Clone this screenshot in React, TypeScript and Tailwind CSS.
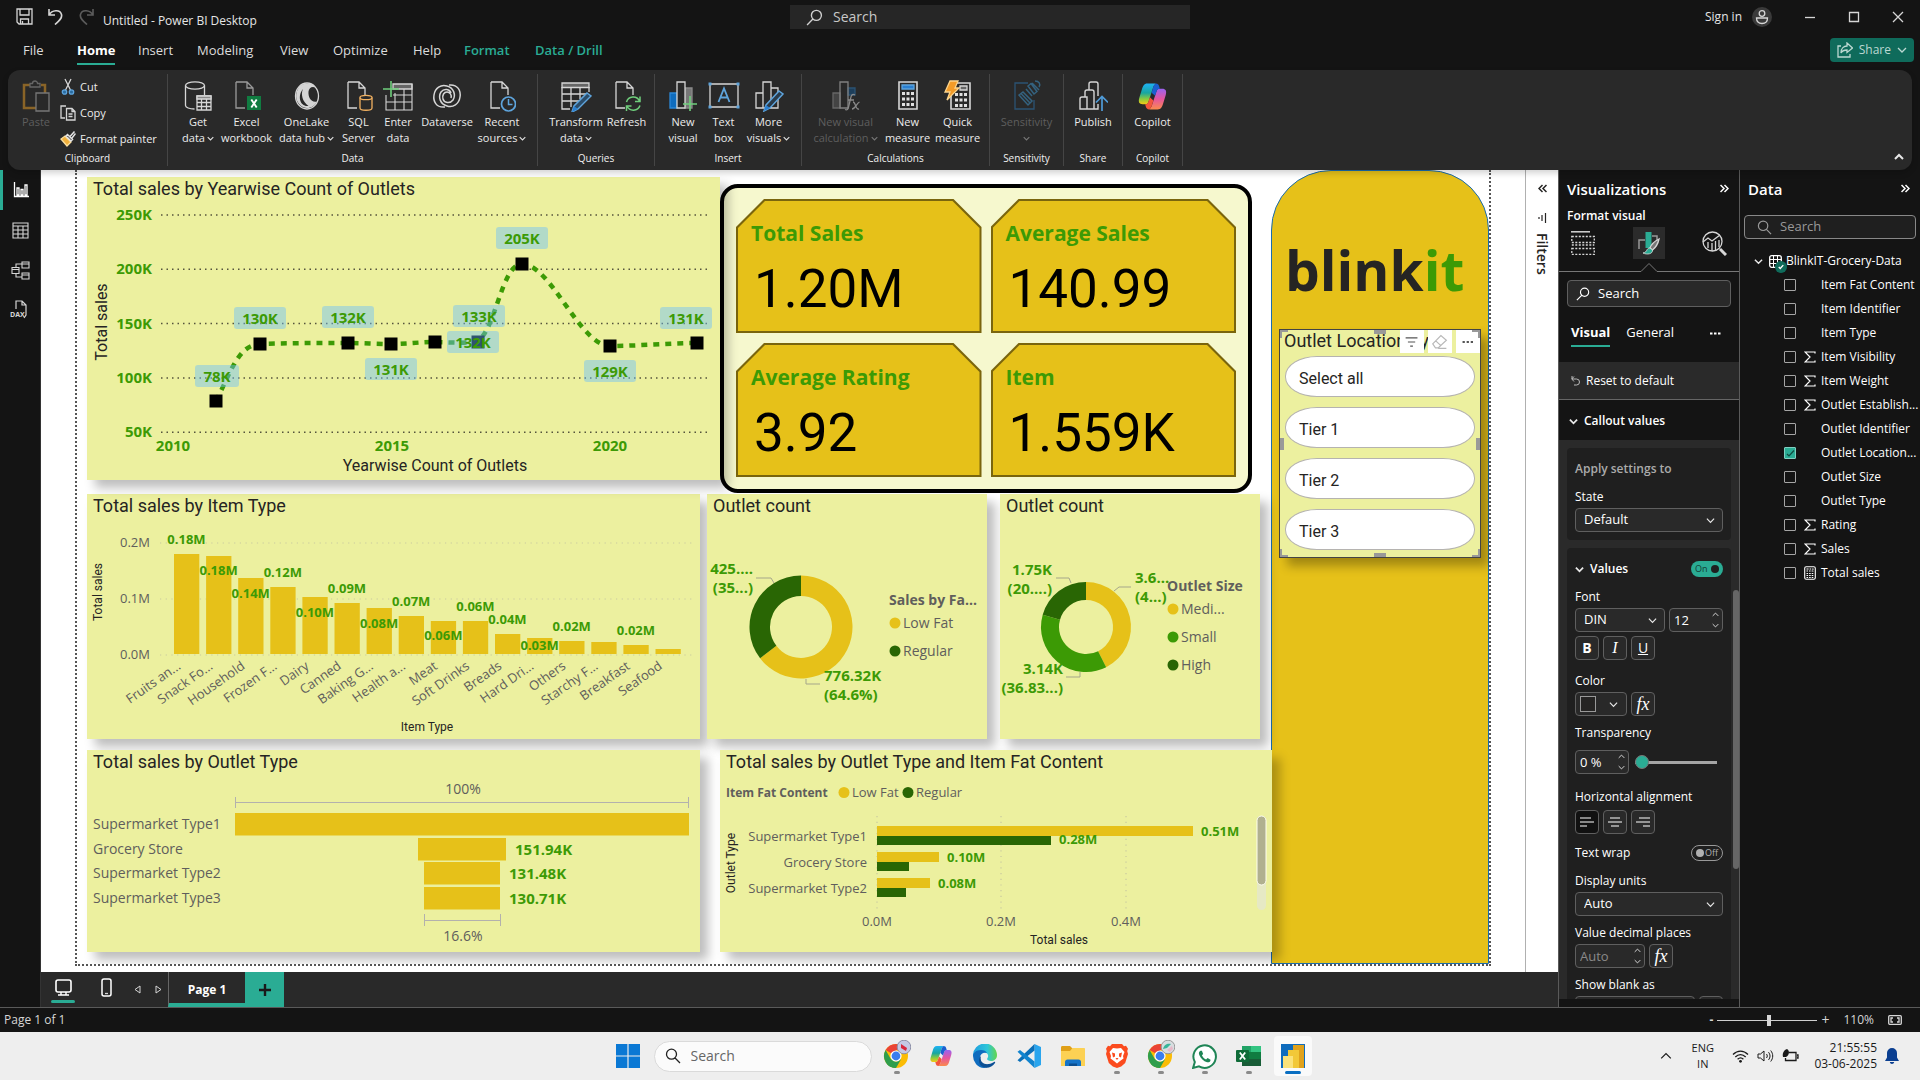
import React, { useState } from "react";
import type { ReactNode } from "react";

const YELLOW = "#e6c119";
const GREEN = "#3c9a05";
const DARK = "#296604";
const GREY = "#605e5c";

/* ---------- small shared glyphs ---------- */

function Svg({ size = 28, h, vb = "0 0 28 28", children }: { size?: number; h?: number; vb?: string; children: ReactNode }) {
  return (
    <svg width={size} height={h ?? size} viewBox={vb} fill="none" stroke="#d6d6d6" strokeWidth="1.3" aria-hidden="true" className="shrink-0">
      {children}
    </svg>
  );
}

function Chevron({ size = 8, color = "#e8e8e8", up = false, w = 1.6 }: { size?: number; color?: string; up?: boolean; w?: number }) {
  return (
    <svg width={size} height={size} viewBox="0 0 10 10" fill="none" stroke={color} strokeWidth={w} aria-hidden="true" className="shrink-0">
      <path d={up ? "M1 7l4-4 4 4" : "M1 3l4 4 4-4"} />
    </svg>
  );
}

function DoubleChevron({ left = false, color = "#fff" }: { left?: boolean; color?: string }) {
  return (
    <svg width="9" height="9" viewBox="0 0 9 9" fill="none" stroke={color} strokeWidth="1.5" aria-hidden="true">
      <path d={left ? "M4.5 1L1 4.500l3.500 3.500M8.500 1L5 4.500l3.500 3.500" : "M.5 1L4 4.500.5 8M4.500 1L8 4.500 4.500 8"} />
    </svg>
  );
}

function Magnifier({ size = 16, flip = false, color = "#d0d0d0" }: { size?: number; flip?: boolean; color?: string }) {
  return (
    <svg width={size} height={size} viewBox="0 0 16 16" fill="none" stroke={color} strokeWidth="1.3" aria-hidden="true" className="shrink-0">
      {flip ? <path d="M6.500 9.500L1 15M14.500 6a4.700 4.700 0 1 1-9.400 0 4.700 4.700 0 0 1 9.400 0z" /> : <path d="M9.800 9.800L15 15M11.500 6.200a5 5 0 1 1-10 0 5 5 0 0 1 10 0z" />}
    </svg>
  );
}

/* ---------- ribbon icons ---------- */

const PagePath = "M3 1h11l6 6v7M14 1v6h6M3 1v26h9";

const icons: Record<string, ReactNode> = {
  paste: (
    <Svg size={28} h={32} vb="0 0 28 32">
      <path d="M8 5H2v23h12M19 5h4v8" stroke="#8a6427" strokeWidth="2.500" />
      <path d="M8 3.500h2.500a2.500 2.500 0 0 1 5 0H18V7H8z" stroke="#666" />
      <path d="M14 13h13v18H14z" stroke="#777" fill="#292929" />
    </Svg>
  ),
  getData: (
    <Svg size={28} h={31} vb="0 0 28 31">
      <ellipse cx="11" cy="4.500" rx="9.500" ry="3.600" />
      <path d="M1.500 4.500v20c0 2 4 3.500 9 3.500M20.500 4.500V14" />
      <path d="M13 15h14v14H13z" fill="#292929" />
      <path d="M13 17.500h14M13 21.500h14M13 25.500h14M17.500 17v12M22.500 17v12" />
      <path d="M13 15h14v3H13z" fill="#888" />
    </Svg>
  ),
  excel: (
    <Svg size={28} h={31} vb="0 0 28 31">
      <path d={PagePath} stroke="#9a9a9a" />
      <rect x="14" y="15" width="14" height="14" fill="#107c41" stroke="none" />
      <path d="M18.300 18.500l5.400 8M23.700 18.500l-5.400 8" stroke="#fff" strokeWidth="1.900" />
    </Svg>
  ),
  onelake: (
    <Svg size={30} h={30} vb="0 0 30 30">
      <ellipse cx="15" cy="15" rx="11.500" ry="13" strokeWidth="1.300" />
      <path d="M6 8C9 1 21 1 24 7c-3.500-2.500-7-.5-7.500 3.500C16 16 19 22 25 20.500c-2 4-5.500 6.500-10 6.500-2.500 0-5-1-7-3C3 19 3.500 12 6 8z" fill="#d4d4d4" stroke="none" />
      <path d="M11 8c-2.500 5-.5 13 5.500 17C8 26 5 15 11 8zM18.500 10.500c2.500-3 6.500-.5 6.500 3.500 0 2.500-1.500 4-3.500 4-3.500-1.200-5-5-3-7.500z" fill="#292929" stroke="none" />
    </Svg>
  ),
  sql: (
    <Svg size={28} h={31} vb="0 0 28 31">
      <path d={PagePath} />
      <path d="M15 16.500v10.500c0 3 12 3 12 0V16.500" stroke="#f0b060" fill="#292929" />
      <ellipse cx="21" cy="16.500" rx="6" ry="2.200" stroke="#f0b060" fill="#292929" />
    </Svg>
  ),
  enter: (
    <Svg size={30} h={31} vb="0 0 30 31">
      <path d="M10 3h19v5H10z" fill="#666" />
      <path d="M29 3v26H3V14M3 21h26M10 14h19M12 12v17M21 8v21" strokeWidth="1.100" />
      <path d="M8 0v16M0 8h16" stroke="#6fce7c" strokeWidth="1.600" />
    </Svg>
  ),
  dataverse: (
    <Svg size={30} h={28} vb="0 0 30 28">
      <path d="M13 25C4 26 1 19 2 13 3 6 9 2 15 4c7 2 9 9 6 14-3 4-9 3-10-1-1-4 1-7 4-7s5 3 4 6M17 3c9-1 12 6 11 12-1 7-7 11-13 9-7-2-9-9-6-14 3-4 9-3 10 1" strokeWidth="1.500" />
    </Svg>
  ),
  recent: (
    <Svg size={28} h={31} vb="0 0 28 31">
      <path d={PagePath} />
      <circle cx="20.500" cy="23" r="7" stroke="#5ea4dc" strokeWidth="1.700" fill="#292929" />
      <path d="M20.500 18v5.500h4" stroke="#5ea4dc" strokeWidth="1.500" />
    </Svg>
  ),
  transform: (
    <Svg size={32} h={31} vb="0 0 32 31">
      <path d="M2 2h27v4.500H2z" fill="#666" />
      <path d="M2 6v22h8M2 13h24M2 20h17M11 6v20M20 6v12M29 6v5" />
      <path d="M27 12l4 3-13 13-6 3 2-6z" fill="#2b4d6b" stroke="#5ea4dc" strokeWidth="1.500" />
      <path d="M14 25l4 3-6 3z" fill="#2a7fd0" stroke="none" />
    </Svg>
  ),
  refresh: (
    <Svg size={28} h={31} vb="0 0 28 31">
      <path d={PagePath} />
      <path d="M13.500 21a7 7 0 0 1 13-1M27 15.500V20.500h-5M27 24.500a7 7 0 0 1-13 .5M13.500 30v-5h5" stroke="#6fce7c" strokeWidth="1.500" />
    </Svg>
  ),
  newVisual: (
    <Svg size={30} h={31} vb="0 0 30 31">
      <path d="M2 12h7v15H2z" fill="#0f6cbd" stroke="#2b88d8" />
      <path d="M17 7h7v20h-7z" fill="#777" stroke="#8a8a8a" />
      <path d="M9 1h8v26H9z" fill="#292929" />
      <path d="M22 15v15M15 23h14" stroke="#6fce7c" strokeWidth="1.600" />
    </Svg>
  ),
  textBox: (
    <Svg size={32} h={28} vb="0 0 32 28">
      <path d="M2 2h28v23H2z" />
      <path d="M10.500 20L16 6.500 21.500 20M12.500 15.500h7" stroke="#5ea4dc" strokeWidth="1.800" />
      <path d="M.5.5h3v3h-3zM28.500.5h3v3h-3zM.5 23.500h3v3h-3zM28.500 23.500h3v3h-3z" fill="#5ea4dc" stroke="none" />
    </Svg>
  ),
  moreVisuals: (
    <Svg size={30} h={31} vb="0 0 30 31">
      <path d="M2 12h7v15H2zM9 1h8v26H9zM17 7h7v20h-7z" />
      <path d="M25 10l4 3-13 14-6 3 2-6z" fill="#2a3b4a" stroke="#5ea4dc" strokeWidth="1.500" />
      <path d="M12 24l4 3-6 3z" fill="#2a7fd0" stroke="none" />
    </Svg>
  ),
  newCalc: (
    <Svg size={30} h={31} vb="0 0 30 31">
      <path d="M2 12h7v15H2z" fill="#444" stroke="#666" />
      <path d="M17 7h7v7h-7z" fill="#1d3e5a" stroke="#2b5373" />
      <path d="M9 1h8v26H9z" stroke="#808080" />
      <path d="M24 14c-3-2-4 1-4.500 4l-2 8c-.5 2.500-1.500 3.500-3.500 2.500M17 19h6M22 21c3 0 2 8 6 7M28.500 21c-3 1-4 7-7.500 7" stroke="#8a8a8a" />
    </Svg>
  ),
  calc: (
    <Svg size={24} h={31} vb="0 0 24 31">
      <path d="M3 1h18v27H3z" strokeWidth="1.600" />
      <path d="M6 4h12v4H6z" fill="#2a7fd0" stroke="#5ea4dc" />
      <path d="M6 11h3v3H6zM10.500 11h3v3h-3zM15 11h3v3h-3zM6 16.500h3v3H6zM10.500 16.500h3v3h-3zM15 16.500h3v3h-3zM6 22h3v3H6zM10.500 22h3v3h-3zM15 22h3v3h-3z" fill="#e0e0e0" stroke="none" />
    </Svg>
  ),
  quick: (
    <Svg size={30} h={32} vb="0 0 30 32">
      <path d="M10 3h17v26H8V16" strokeWidth="1.600" />
      <path d="M17 6h7v4h-7z" fill="#666" />
      <path d="M12 13h3v3h-3zM16.500 13h3v3h-3zM21 13h3v3h-3zM12 18.500h3v3h-3zM16.500 18.500h3v3h-3zM21 18.500h3v3h-3zM12 24h3v3h-3zM16.500 24h3v3h-3zM21 24h3v3h-3z" fill="#e0e0e0" stroke="none" />
      <path d="M7 1h8l-3 7h4L4 20l3-8H2z" fill="#f29b28" stroke="#fbd48c" />
    </Svg>
  ),
  sensitivity: (
    <Svg size={30} h={32} vb="0 0 30 32">
      <path d="M22 20v9H3V3h13" stroke="#2b5373" />
      <path d="M7 15l4-3 9 9-4 4zM9 13.500l9 9.500" stroke="#34627f" strokeWidth="1.500" />
      <path d="M16 6l6 8 3-2.500-6-8zM20 3l7 7M23 1c4 0 6 3 4 6M14 9l6 7" stroke="#34627f" strokeWidth="1.500" />
    </Svg>
  ),
  publish: (
    <Svg size={30} h={32} vb="0 0 30 32">
      <path d="M2 29V19a2 2 0 0 1 2-2h5v12zM7 17v-5a2 2 0 0 1 2-2h5a2 2 0 0 1 2 2v17H9M11 10V4a2 2 0 0 1 2-2h5a2 2 0 0 1 2 2v12M16 29h4v-5" strokeWidth="1.400" />
      <path d="M24 31V17M18 22.500l6-6 6 6" stroke="#4f9bd8" strokeWidth="1.700" />
    </Svg>
  ),
  copilot: <Copilot size={31} />,
  cut: (
    <Svg size={14} h={18} vb="0 0 14 18">
      <path d="M4 1l5.500 11M10 1L4.500 12" />
      <circle cx="3.500" cy="14" r="2.200" stroke="#5ea4dc" fill="#2b6ca0" />
      <circle cx="10.500" cy="14" r="2.200" stroke="#5ea4dc" fill="#2b6ca0" />
    </Svg>
  ),
  copy: (
    <Svg size={16} h={16} vb="0 0 16 16">
      <path d="M5 13H1V1h5M6.500 3.500H12l3 3V15H6.500zM12 3.500v3h3M8.500 9h4M8.500 11.500h4" />
    </Svg>
  ),
  painter: (
    <Svg size={16} h={16} vb="0 0 16 16">
      <path d="M1 8l6 7 4-4-6-6z" fill="#f0b03c" stroke="#fbe0a0" />
      <path d="M6 5l5 5 1.500-1.500-5-5zM10 5.500L14.500.5M12 7l3.500-4.500" stroke="#e4e4e4" strokeWidth="1.500" />
    </Svg>
  ),
};

function Copilot({ size = 24 }: { size?: number }) {
  return (
    <svg width={size} height={size} viewBox="0 0 24 24" aria-hidden="true" className="shrink-0">
      <defs>
        <linearGradient id="cpA" x1="0" y1="0" x2="0" y2="1">
          <stop offset="0" stopColor="#1fb2f5" />
          <stop offset=".45" stopColor="#18a6a0" />
          <stop offset=".75" stopColor="#8ccb3c" />
          <stop offset="1" stopColor="#f6c915" />
        </linearGradient>
        <linearGradient id="cpB" x1="0" y1="0" x2="0" y2="1">
          <stop offset="0" stopColor="#9a62f0" />
          <stop offset=".5" stopColor="#e6559e" />
          <stop offset="1" stopColor="#fb8a4c" />
        </linearGradient>
      </defs>
      <path d="M14.500 2H8C5.500 2 4.500 4 3.700 6.800L1.800 13c-1 3.400 0 5 2.600 5h2.400c1 0 1.600-.6 2-1.800L12.500 5c.4-1.300 1-2 2-3z" fill="url(#cpA)" />
      <path d="M9.500 22H16c2.500 0 3.500-2 4.300-4.800l1.900-6.200c1-3.400 0-5-2.600-5h-2.400c-1 0-1.600.6-2 1.800L11.500 19c-.4 1.300-1 2-2 3z" fill="url(#cpB)" />
      <path d="M14.500 2c1.600 0 2.300.8 2.700 2.200l.5 1.800c-1.400 0-2 .5-2.500 1.800L14 11.500 11.300 9l1.200-4c.4-1.300 1-2 2-3z" fill="#1b5fd0" />
      <path d="M9.500 22c-1.600 0-2.300-.8-2.700-2.200L6.300 18c1.400 0 2-.5 2.500-1.800l1.200-3.700 2.700 2.500-1.200 4c-.4 1.300-1 2-2 3z" fill="#f4553c" />
    </svg>
  );
}

/* ---------- title bar, tabs and ribbon ---------- */

function TitleBar() {
  return (
    <header className="grid h-8 grid-cols-[790fr_400px_730fr] items-center text-[#e6e6e6]">
      <div className="flex items-center pl-4">
        <button aria-label="Save" className="mr-3.5">
          <Svg size={17} vb="0 0 17 17"><path d="M1 1h15v15H3l-2-2zM4 1v6h9V1M4.500 16v-5h8v5M6.500 16v-3" /></Svg>
        </button>
        <button aria-label="Undo" className="mr-3.5">
          <Svg size={17} vb="0 0 17 17"><path d="M2 1v6h6M2 7C5 2 13 1 14.500 6.500 15.500 10 12 13 8 16.500" strokeWidth="1.600" /></Svg>
        </button>
        <button aria-label="Redo" className="mr-2">
          <Svg size={17} vb="0 0 17 17"><path d="M15 1v6H9M15 7C12 2 4 1 2.500 6.500 1.500 10 5 13 9 16.500" stroke="#5c5c5c" strokeWidth="1.600" /></Svg>
        </button>
        <span className="pt-2.5 text-xs">Untitled - Power BI Desktop</span>
      </div>
      <label className="mt-0.5 flex h-6 items-center gap-2.5 bg-[#262626] pl-4">
        <Magnifier size={17} flip />
        <input aria-label="Search commands" placeholder="Search" className="w-full bg-transparent text-sm outline-none placeholder:text-[#c8c8c8]" />
      </label>
      <div className="flex items-center justify-end pt-0.5 text-xs">
        <button className="mr-2.5">Sign in</button>
        <button aria-label="Account" className="mr-8 flex size-5 items-center justify-center rounded-full bg-[#3a3a3a]">
          <Svg size={16} vb="0 0 16 16"><circle cx="8" cy="4.500" r="2.800" /><path d="M2.500 9h11c0 3.500-2 5.500-5.500 5.500S2.500 12.500 2.500 9z" /></Svg>
        </button>
        <button aria-label="Minimize" className="mr-8"><Svg size={12} vb="0 0 12 12"><path d="M1 6.500h10" /></Svg></button>
        <button aria-label="Maximize" className="mr-8"><Svg size={12} vb="0 0 12 12"><path d="M1.500 1.500h9v9h-9z" /></Svg></button>
        <button aria-label="Close" className="mr-4"><Svg size={12} vb="0 0 12 12"><path d="M1 1l10 10M11 1L1 11" /></Svg></button>
      </div>
    </header>
  );
}

function Tabs() {
  const tabs: [string, string][] = [
    ["File", "w-[54px]"],
    ["Home", "w-[61px] font-bold text-white"],
    ["Insert", "w-[59px]"],
    ["Modeling", "w-[83px]"],
    ["View", "w-[53px]"],
    ["Optimize", "w-20"],
    ["Help", "w-[51px]"],
    ["Format", "w-[71px] font-semibold text-[#2aac94]"],
    ["Data / Drill", "w-20 font-semibold text-[#2aac94]"],
  ];
  return (
    <nav className="flex h-[38px] items-center justify-between pr-1.5 pb-0.5 pl-[23px] text-[#dcdcdc]">
      <div className="flex">
        {tabs.map(([t, c]) => (
          <button key={t} className={`${c} whitespace-nowrap text-left text-[13px] leading-5`}>
            <span className={t === "Home" ? "border-b-2 border-[#2aac94] pb-1" : ""}>{t}</span>
          </button>
        ))}
      </div>
      <button className="flex h-6 items-center gap-1.5 rounded bg-[#0f6b5b] px-[7px] text-xs text-[#bcd8d2]">
        <Svg size={16} vb="0 0 16 16"><path d="M4 4H1v11h12v-3M4 11c0-5 3-7 6-7V1l5.500 5L10 10.500V8C7 8 5 9 4 11z" stroke="#bcd8d2" /></Svg>
        Share
        <Chevron size={10} color="#bcd8d2" w={1.3} />
      </button>
    </nav>
  );
}

type Item = { icon: string; lines: string[]; w: string; drop?: boolean; off?: boolean };

function RibbonItem({ icon, lines, w, drop, off }: Item) {
  return (
    <button disabled={off} className={`${w} flex shrink-0 flex-col items-center whitespace-nowrap text-[11px] leading-4 ${off ? "text-[#5e5e5e]" : "text-[#ececec]"}`}>
      <span className="flex h-10 items-center pt-1">{icons[icon]}</span>
      <span>{lines[0]}</span>
      <span className="flex h-4 items-center gap-0.5">
        {lines[1]}
        {drop && <Chevron size={7} color={off ? "#777" : "#e0e0e0"} />}
      </span>
    </button>
  );
}

function RibbonGroup({ name, w, items }: { name: string; w: string; items: Item[] }) {
  return (
    <section aria-label={name} className={`${w} flex shrink-0 flex-col border-r border-[#454545]`}>
      <div className="flex justify-center">{items.map((i) => <RibbonItem key={i.icon + i.lines.join()} {...i} />)}</div>
      <div className="mt-1.5 text-center text-[10px] leading-3 text-[#f0f0f0]">{name}</div>
    </section>
  );
}

function Ribbon() {
  return (
    <div className="relative z-20 mx-2 flex h-[100px] rounded-xl bg-[#292929] py-1 shadow-[0_3px_6px_rgba(0,0,0,0.18)]">
      <section aria-label="Clipboard" className="flex w-40 shrink-0 flex-col border-r border-[#454545]">
        <div className="flex h-[78px] pl-3">
          <button disabled className="flex w-8 flex-col items-center text-[11px] leading-4 text-[#5e5e5e]">
            <span className="flex h-10 items-end pb-0.5">{icons.paste}</span>
            Paste
          </button>
          <div className="flex flex-col pl-2 text-[11px] text-[#ececec]">
            {[["Cut", "cut"], ["Copy", "copy"], ["Format painter", "painter"]].map(([t, i]) => (
              <button key={t} className="flex h-[26px] items-center gap-1 whitespace-nowrap">
                <span className="flex w-4 justify-center">{icons[i]}</span>
                {t}
              </button>
            ))}
          </div>
        </div>
        <div className="text-center text-[10px] leading-3 text-[#f0f0f0]">Clipboard</div>
      </section>
      <RibbonGroup name="Data" w="w-[370px]" items={[
        { icon: "getData", lines: ["Get", "data"], w: "w-[46px]", drop: true },
        { icon: "excel", lines: ["Excel", "workbook"], w: "w-[51px]" },
        { icon: "onelake", lines: ["OneLake", "data hub"], w: "w-[69px]", drop: true },
        { icon: "sql", lines: ["SQL", "Server"], w: "w-[35px]" },
        { icon: "enter", lines: ["Enter", "data"], w: "w-11" },
        { icon: "dataverse", lines: ["Dataverse", ""], w: "w-[54px]" },
        { icon: "recent", lines: ["Recent", "sources"], w: "w-14", drop: true },
      ]} />
      <RibbonGroup name="Queries" w="w-[117px]" items={[
        { icon: "transform", lines: ["Transform", "data"], w: "w-[61px]", drop: true },
        { icon: "refresh", lines: ["Refresh", ""], w: "w-10" },
      ]} />
      <RibbonGroup name="Insert" w="w-[147px]" items={[
        { icon: "newVisual", lines: ["New", "visual"], w: "w-[41px]" },
        { icon: "textBox", lines: ["Text", "box"], w: "w-10" },
        { icon: "moreVisuals", lines: ["More", "visuals"], w: "w-[50px]", drop: true },
      ]} />
      <RibbonGroup name="Calculations" w="w-[188px]" items={[
        { icon: "newCalc", lines: ["New visual", "calculation"], w: "w-[72px]", drop: true, off: true },
        { icon: "calc", lines: ["New", "measure"], w: "w-[52px]" },
        { icon: "quick", lines: ["Quick", "measure"], w: "w-12" },
      ]} />
      <RibbonGroup name="Sensitivity" w="w-[74px]" items={[{ icon: "sensitivity", lines: ["Sensitivity", ""], w: "w-16", drop: true, off: true }]} />
      <RibbonGroup name="Share" w="w-[59px]" items={[{ icon: "publish", lines: ["Publish", ""], w: "w-14" }]} />
      <RibbonGroup name="Copilot" w="w-[60px]" items={[{ icon: "copilot", lines: ["Copilot", ""], w: "w-14" }]} />
      <button aria-label="Collapse ribbon" className="mr-2 ml-auto self-end pb-1"><Chevron size={10} up w={2} /></button>
    </div>
  );
}

/* ---------- report visuals ---------- */

const CARD = "bg-[#ecf09f] shadow-[8px_8px_10px_rgba(0,0,0,0.26)]";

function Visual({ title, className = "", children }: { title: string; className?: string; children: ReactNode }) {
  return (
    <section aria-label={title} className={`${CARD} ${className}`}>
      <h2 className="h-6 truncate pl-1.5 font-[Roboto] text-[18px] leading-6 text-[#252423]">{title}</h2>
      {children}
    </section>
  );
}

function Plot({ vb, label, children }: { vb: string; label: string; children: ReactNode }) {
  return (
    <svg viewBox={vb} role="img" aria-label={label} className="block h-auto w-full">
      {children}
    </svg>
  );
}

function DataText({ x, y, children, a = "start", s = 15 }: { x: number; y: number; children: ReactNode; a?: "start" | "middle" | "end"; s?: number }) {
  return <text x={x} y={y} textAnchor={a} fontSize={s} fontWeight="700" fill={GREEN}>{children}</text>;
}

function AxisText({ x, y, children, a = "start", s = 14, bold = false }: { x: number; y: number; children: ReactNode; a?: "start" | "middle" | "end"; s?: number; bold?: boolean }) {
  return <text x={x} y={y} textAnchor={a} fontSize={s} fontWeight={bold ? 700 : 400} fill={GREY}>{children}</text>;
}

function AxisTitle({ x, y, children, s = 12, vertical = false }: { x: number; y: number; children: ReactNode; s?: number; vertical?: boolean }) {
  return (
    <text x={x} y={y} textAnchor="middle" fontSize={s} fill="#252423" className="font-[Roboto]" transform={vertical ? `rotate(-90 ${x} ${y})` : undefined}>
      {children}
    </text>
  );
}

function LineVisual() {
  const pts = [[216, 401], [260, 344], [348, 343], [391, 344], [435, 342], [478, 342], [522, 264], [610, 346], [697, 343]];
  const tags: [number, number, string][] = [
    [217, 376, "78K"], [260, 318, "130K"], [348, 317, "132K"], [391, 369, "131K"], [479, 316, "133K"],
    [473, 342, "132K"], [522, 238, "205K"], [610, 371, "129K"], [686, 318, "131K"],
  ];
  return (
    <Plot vb="87 201 633 279" label="Total sales per year, 2011 to 2022">
      {["250K", "200K", "150K", "100K", "50K"].map((t, i) => (
        <g key={t}>
          <line x1="161" x2="709" y1={215 + i * 54.3} y2={215 + i * 54.3} stroke="#55543c" strokeWidth="1.500" strokeDasharray="1.500 4" />
          <DataText x={152} y={220 + i * 54.3} a="end">{t}</DataText>
        </g>
      ))}
      {[["2010", 173], ["2015", 392], ["2020", 610]].map(([t, x]) => <DataText key={t} x={x as number} y={451} a="middle">{t}</DataText>)}
      <path
        d="M216 401C231 372 238 345 260 344C290 343 318 343 348 343C362 343 377 344 391 344C406 344 420 342 435 342C449 342 464 344 478 341C496 328 502 264 522 264C551 264 580 346 610 346C639 346 668 343 697 343"
        fill="none" stroke={GREEN} strokeWidth="4.500" strokeDasharray="6 6"
      />
      {pts.map(([x, y]) => <rect key={x} x={x - 6.500} y={y - 6.500} width="13" height="13" fill="#000" />)}
      {tags.map(([x, y, t]) => {
        const w = t.length === 3 ? 44 : 52;
        return (
          <g key={`${x}`}>
            <rect x={x - w / 2} y={y - 11} width={w} height="22" rx="3" fill="#6abdfc" fillOpacity=".445" />
            <DataText x={x} y={y + 6} a="middle">{t}</DataText>
          </g>
        );
      })}
      <AxisTitle x={435} y={471} s={16}>Yearwise Count of Outlets</AxisTitle>
      <AxisTitle x={107} y={322} s={16} vertical>Total sales</AxisTitle>
    </Plot>
  );
}

function ItemTypeVisual() {
  const rows: [string, number, string, number][] = [
    ["Fruits an...", 554, "0.18M", 544], ["Snack Fo...", 556, "0.18M", 575], ["Household", 578, "0.14M", 598],
    ["Frozen F...", 587, "0.12M", 577], ["Dairy", 597, "0.10M", 617], ["Canned", 603, "0.09M", 593],
    ["Baking G...", 608, "0.08M", 628], ["Health a...", 616, "0.07M", 606], ["Meat", 621, "0.06M", 640],
    ["Soft Drinks", 621, "0.06M", 611], ["Breads", 634, "0.04M", 624], ["Hard Dri...", 638, "0.03M", 650],
    ["Others", 641, "0.02M", 631], ["Starchy F...", 642, "", 0], ["Breakfast", 645, "0.02M", 635], ["Seafood", 649, "", 0],
  ];
  return (
    <Plot vb="87 518 613 221" label="Total sales per item type">
      {["0.2M", "0.1M", "0.0M"].map((t, i) => (
        <g key={t}>
          <line x1="160" x2="692" y1={543 + i * 56} y2={543 + i * 56} stroke="#c9c9a0" strokeWidth="1.200" strokeDasharray="1.200 4.500" />
          <AxisText x={150} y={547 + i * 56} a="end" s={13}>{t}</AxisText>
        </g>
      ))}
      {rows.map(([n, top], i) => <rect key={n} x={174 + i * 32.1} y={top} width="25.300" height={654 - top} fill={YELLOW} />)}
      {rows.map(([n, , v, y], i) => {
        const cx = 186.500 + i * 32.1;
        return (
          <g key={n}>
            {v && <DataText x={cx} y={y} a="middle" s={13}>{v}</DataText>}
            <text x={cx - 5} y={668} textAnchor="end" fontSize="13" fill={GREY} transform={`rotate(-35 ${cx - 5} 668)`}>{n}</text>
          </g>
        );
      })}
      <AxisTitle x={427} y={731}>Item Type</AxisTitle>
      <AxisTitle x={102} y={592} vertical>Total sales</AxisTitle>
    </Plot>
  );
}

function Ring({ cx, cy, r, ir, parts }: { cx: number; cy: number; r: number; ir: number; parts: [number, string][] }) {
  let from = 0;
  const at = (f: number, rad: number) => `${cx + rad * Math.sin(f * 2 * Math.PI)} ${cy - rad * Math.cos(f * 2 * Math.PI)}`;
  return (
    <>
      {parts.map(([f, color]) => {
        const a = from;
        const b = (from += f);
        const big = f > 0.5 ? 1 : 0;
        return <path key={color} fill={color} d={`M${at(a, r)}A${r} ${r} 0 ${big} 1 ${at(b, r)}L${at(b, ir)}A${ir} ${ir} 0 ${big} 0 ${at(a, ir)}Z`} />;
      })}
    </>
  );
}

function FatDonut() {
  return (
    <Plot vb="707 518 280 221" label="Sales by fat content">
      <Ring cx={801} cy={627} r={51.5} ir={31} parts={[[0.646, YELLOW], [0.354, DARK]]} />
      <path d="M756 578h15l3 5M806 679v5h14" fill="none" stroke="#a5a68a" />
      <DataText x={753} y={574} a="end">425....</DataText>
      <DataText x={753} y={593} a="end">(35...)</DataText>
      <DataText x={824} y={681}>776.32K</DataText>
      <DataText x={824} y={700}>(64.6%)</DataText>
      <AxisText x={889} y={605} bold s={14}>Sales by Fa...</AxisText>
      <circle cx="895" cy="623" r="5.500" fill={YELLOW} />
      <AxisText x={903} y={628}>Low Fat</AxisText>
      <circle cx="895" cy="651" r="5.500" fill={DARK} />
      <AxisText x={903} y={656}>Regular</AxisText>
    </Plot>
  );
}

function SizeDonut() {
  return (
    <Plot vb="1000 518 260 221" label="Outlet count by size">
      <Ring cx={1086} cy={627} r={45} ir={27} parts={[[0.426, YELLOW], [0.368, GREEN], [0.206, DARK]]} />
      <path d="M1056 578h13l2 5M1114 591l5-4h12M1066 677h14v-5" fill="none" stroke="#a5a68a" />
      <DataText x={1052} y={575} a="end">1.75K</DataText>
      <DataText x={1052} y={594} a="end">(20....)</DataText>
      <DataText x={1135} y={583}>3.6...</DataText>
      <DataText x={1135} y={602}>(4...)</DataText>
      <DataText x={1063} y={674} a="end">3.14K</DataText>
      <DataText x={1063} y={693} a="end">(36.83...)</DataText>
      <AxisText x={1167} y={591} bold s={14}>Outlet Size</AxisText>
      {[["Medi...", YELLOW, 609], ["Small", GREEN, 637], ["High", DARK, 665]].map(([t, c, y]) => (
        <g key={t}>
          <circle cx="1173" cy={y} r="5.500" fill={c as string} />
          <AxisText x={1181} y={(y as number) + 5}>{t}</AxisText>
        </g>
      ))}
    </Plot>
  );
}

function FunnelVisual() {
  const rows: [string, number, number, number, string][] = [
    ["Supermarket Type1", 235, 454, 813, ""],
    ["Grocery Store", 418, 88, 838, "151.94K"],
    ["Supermarket Type2", 424, 76, 862, "131.48K"],
    ["Supermarket Type3", 424, 76, 887, "130.71K"],
  ];
  return (
    <Plot vb="87 774 613 178" label="Total sales per outlet type">
      <AxisText x={463} y={794} a="middle">100%</AxisText>
      <path d="M235.500 797v11M235.500 802.500h453M688.500 797v11M424.500 914v12M424.500 920.500h76M500.500 914v12" stroke="#b3b1ad" fill="none" />
      {rows.map(([n, x, w, y, v]) => (
        <g key={n}>
          <AxisText x={93} y={y + 16}>{n}</AxisText>
          <rect x={x} y={y} width={w} height="22.500" fill={YELLOW} />
          {v && <DataText x={x + w + 9} y={y + 17}>{v}</DataText>}
        </g>
      ))}
      <AxisText x={463} y={941} a="middle">16.6%</AxisText>
    </Plot>
  );
}

function ClusterVisual() {
  const rows: [string, number, number, number][] = [["Supermarket Type1", 826, 316, 174], ["Grocery Store", 852, 62, 32], ["Supermarket Type2", 878, 53, 29]];
  return (
    <Plot vb="720 774 552 178" label="Total sales per outlet type and fat content">
      <AxisText x={726} y={797} bold s={12}>Item Fat Content</AxisText>
      <circle cx="844" cy="792.500" r="5.500" fill={YELLOW} />
      <AxisText x={852} y={797} s={13}>Low Fat</AxisText>
      <circle cx="908" cy="792.500" r="5.500" fill={DARK} />
      <AxisText x={916} y={797} s={13}>Regular</AxisText>
      {[["0.0M", 877], ["0.2M", 1001], ["0.4M", 1126]].map(([t, x]) => (
        <g key={t}>
          <line x1={x} x2={x} y1="816" y2="910" stroke="#c9c9a0" strokeWidth="1.200" strokeDasharray="1.200 4.500" />
          <AxisText x={x as number} y={926} a="middle" s={13}>{t}</AxisText>
        </g>
      ))}
      {rows.map(([n, y, a, b]) => (
        <g key={n}>
          <AxisText x={867} y={y + 15} a="end" s={13}>{n}</AxisText>
          <rect x="877" y={y} width={a} height="10" fill={YELLOW} />
          <rect x="877" y={y + 10} width={b} height="9" fill={DARK} />
        </g>
      ))}
      <DataText x={1201} y={836} s={13}>0.51M</DataText>
      <DataText x={1059} y={844} s={13}>0.28M</DataText>
      <DataText x={947} y={862} s={13}>0.10M</DataText>
      <DataText x={938} y={888} s={13}>0.08M</DataText>
      <rect x="1257" y="816" width="9" height="94" rx="4.500" fill="#e6e9c4" />
      <rect x="1257" y="816" width="9" height="69" rx="4.500" fill="#b0b08f" stroke="#fdfdf0" />
      <AxisTitle x={1059} y={944}>Total sales</AxisTitle>
      <AxisTitle x={735} y={863} vertical>Outlet Type</AxisTitle>
    </Plot>
  );
}

function Kpi({ label, value }: { label: string; value: string }) {
  return (
    <div className="bg-[#7a650d] p-0.5 [clip-path:polygon(28px_0,calc(100%-28px)_0,100%_28px,100%_100%,0_100%,0_28px)]">
      <div className="h-full bg-[#e6c119] pt-3.5 pb-2.5 pl-[13px] [clip-path:polygon(27px_0,calc(100%-27px)_0,100%_27px,100%_100%,0_100%,0_27px)]">
        <div className="text-[21px] leading-9 font-bold text-[#3c9a05]">{label}</div>
        <div className="mt-1.5 pl-[3px] font-[Roboto] text-[53px] leading-[64px] text-black">{value}</div>
      </div>
    </div>
  );
}

const handles = [
  "top-0 left-0 h-2 w-2 border-t-2 border-l-2", "top-0 right-0 h-2 w-2 border-t-2 border-r-2",
  "bottom-0 left-0 h-2 w-2 border-b-2 border-l-2", "bottom-0 right-0 h-2 w-2 border-b-2 border-r-2",
  "top-0 left-1/2 h-0.5 w-3 -translate-x-1/2 border-2", "bottom-0 left-1/2 h-0.5 w-3 -translate-x-1/2 border-2",
  "left-0 top-1/2 w-0.5 h-3 -translate-y-1/2 border-2", "right-0 top-1/2 w-0.5 h-3 -translate-y-1/2 border-2",
];

function Slicer() {
  return (
    <section aria-label="Outlet Location Type" className="relative mx-[7px] mt-[26px] border border-[#444] bg-[#ecf09f] shadow-[8px_8px_10px_rgba(0,0,0,0.3)]">
      <h2 className="h-6 overflow-hidden pl-1 font-[Roboto] text-[18px] leading-[22px] whitespace-nowrap text-[#252423]">Outlet Location Type</h2>
      <div className="absolute top-0 right-0 flex gap-1">
        {[
          ["Filters on this visual", <path key="f" d="M4 6.500h13M6.500 11h8M9 15.500h3" stroke="#555" />],
          ["Clear selections", <path key="c" d="M3 13l9-9 6 5-9 8.500H6zM6 9.500l6 5.500M9 18h9" stroke="#b8b8b8" />],
          ["More options", <path key="m" d="M5 11h2.500M9.500 11H12M14 11h2.500" stroke="#555" strokeWidth="2.400" />],
        ].map(([t, p]) => (
          <button key={t as string} aria-label={t as string} className="flex h-[23px] w-6 items-center justify-center bg-white">
            <Svg size={20} vb="0 0 22 22">{p}</Svg>
          </button>
        ))}
      </div>
      <div className="flex flex-col gap-2.5 px-[5px] pt-0.5 pb-[7px]">
        {["Select all", "Tier 1", "Tier 2", "Tier 3"].map((t) => (
          <button key={t} className="h-[41px] rounded-[32px/20px] border border-[#b5b3b0] bg-white pt-1 pl-[13px] text-left font-[Roboto] text-base text-[#252423]">{t}</button>
        ))}
      </div>
      {handles.map((h) => <span key={h} aria-hidden="true" className={`absolute border-[#999] ${h}`} />)}
    </section>
  );
}

function Report() {
  return (
    <div className="relative mx-[34px] mb-1.5 flex min-h-0 flex-1 overflow-hidden border-x-2 border-b-2 border-dotted border-[#555]">
      <div className="relative z-10 flex min-w-0 flex-1 flex-col gap-[11px] pt-[7px] pl-2.5">
        <div className="-mb-[11px] grid grid-cols-[633fr_532fr_20fr] items-start">
          <Visual title="Total sales by Yearwise Count of Outlets" className="relative z-10"><LineVisual /></Visual>
          <div className="mt-[7px] mb-px grid grid-cols-2 gap-x-[9px] gap-y-2.5 rounded-[18px] border-4 border-black bg-[#f6f8ce] px-3 pt-[11px] pb-3">
            <Kpi label="Total Sales" value="1.20M" />
            <Kpi label="Average Sales" value="140.99" />
            <Kpi label="Average Rating" value="3.92" />
            <Kpi label="Item" value="1.559K" />
          </div>
        </div>
        <div className="grid grid-cols-[613fr_7fr_280fr_13fr_260fr_12fr]">
          <Visual title="Total sales by Item Type"><ItemTypeVisual /></Visual>
          <Visual title="Outlet count" className="col-start-3"><FatDonut /></Visual>
          <Visual title="Outlet count" className="col-start-5"><SizeDonut /></Visual>
        </div>
        <div className="grid grid-cols-[613fr_20fr_552fr]">
          <Visual title="Total sales by Outlet Type"><FunnelVisual /></Visual>
          <Visual title="Total sales by Outlet Type and Item Fat Content" className="col-start-3"><ClusterVisual /></Visual>
        </div>
      </div>
      <aside className="-ml-px w-[218px] shrink-0 rounded-t-[60px] border border-[#1a6cae] bg-[#e6c119]">
        <div className="pt-[66px] pl-[13px] text-[55px] leading-[66px] font-bold text-[#252423]">blink<span className="text-[#3c9a05]">it</span></div>
        <div className="relative z-20"><Slicer /></div>
      </aside>
    </div>
  );
}

/* ---------- side rail, page tabs, filters ---------- */

function Rail() {
  return (
    <nav aria-label="Views" className="flex w-[41px] shrink-0 flex-col border-r border-[#333] bg-[#141414]">
      <button aria-label="Report view" className="flex h-10 items-center justify-center border-l-[3px] border-[#2aac94] pr-0.5">
        <Svg size={16} vb="0 0 16 16"><path d="M1.500 0v14.500H16M4 6h2v7H4zM8 7.500h2V13H8zM12 3h2v10h-2z" stroke="#fff" /></Svg>
      </button>
      <button aria-label="Table view" className="flex h-10 items-center justify-center"><Svg size={17} vb="0 0 17 17"><path d="M1 1h15v15H1zM1 4h15M1 8h15M1 12h15M6 4v12M11 4v12" strokeWidth="1.100" /></Svg></button>
      <button aria-label="Model view" className="flex h-10 items-center justify-center"><Svg size={19} vb="0 0 19 19"><path d="M11 1h7v6h-7zM1 6.500h7v6H1zM11 12h7v6h-7zM11 3H5v3.500M5 12.500V16h6M11 3h7M1 8.500h7M11 14h7" strokeWidth="1.100" /></Svg></button>
      <button aria-label="DAX query view" className="flex h-10 items-center justify-center">
        <svg width="20" height="20" viewBox="0 0 20 20" fill="none" stroke="#d6d6d6" strokeWidth="1.200" aria-hidden="true">
          <path d="M6 9V1h6l4 4v10l-2 3M12 1v4h4" />
          <text x="0" y="17" fontSize="7" fill="#d6d6d6" stroke="none" fontWeight="700">DAX</text>
        </svg>
      </button>
    </nav>
  );
}

function PageTabs() {
  return (
    <div className="flex h-[35px] shrink-0 items-stretch bg-[#292929] text-xs text-white">
      <button aria-label="Desktop layout" className="ml-2.5 flex w-6 flex-col items-center pt-[7px]">
        <Svg size={17} vb="0 0 17 17"><rect x="1" y="1" width="15" height="12" rx="2" stroke="#fff" strokeWidth="1.600" /><path d="M3 16h11M6 13v3M11 13v3" stroke="#fff" strokeWidth="1.400" /></Svg>
        <span className="mt-1 h-[3px] w-full rounded bg-[#2aac94]" />
      </button>
      <button aria-label="Mobile layout" className="ml-[26px] flex items-start pt-1.5"><Svg size={11} h={19} vb="0 0 11 19"><rect x="1" y="1" width="9" height="17" rx="2" stroke="#fff" strokeWidth="1.500" /><path d="M4 15.500h3" /></Svg></button>
      <button aria-label="Previous page" className="ml-[22px]"><Svg size={7} h={9} vb="0 0 7 9"><path d="M6 1v7L1 4.500z" strokeWidth="1" /></Svg></button>
      <button aria-label="Next page" className="ml-3.5"><Svg size={7} h={9} vb="0 0 7 9"><path d="M1 1v7l5-3.500z" strokeWidth="1" /></Svg></button>
      <button className="ml-1.5 w-[77px] border-b-4 border-l border-b-[#2aac94] border-l-[#666] pt-1 font-bold">Page 1</button>
      <button aria-label="New page" className="flex w-[39px] items-center justify-center bg-[#2aac94]"><Svg size={12} vb="0 0 12 12"><path d="M6 0v12M0 6h12" stroke="#1a1a1a" strokeWidth="2.400" /></Svg></button>
    </div>
  );
}

function FiltersPane() {
  return (
    <aside aria-label="Filters" className="flex w-[33px] shrink-0 flex-col items-center border-l border-[#b0b0b0] bg-white pt-3.5">
      <button aria-label="Expand filters"><DoubleChevron left color="#252423" /></button>
      <span className="mt-5 flex items-center gap-2.5 text-sm font-semibold text-[#252423] [writing-mode:vertical-rl]">
        <svg width="10" height="10" viewBox="0 0 10 10" stroke="#252423" strokeWidth="1.200" aria-hidden="true"><path d="M8.500 0v10M5 2v6M2 4v2" /></svg>
        Filters
      </span>
    </aside>
  );
}

/* ---------- visualizations pane ---------- */

const FIELD = "border border-[#5f5f5f] rounded-sm bg-[#292929] text-white text-[13px]";

function Select({ id, value, className, options }: { id: string; value: string; className: string; options: string[] }) {
  return (
    <div className={`relative ${className}`}>
      <select id={id} defaultValue={value} className={`${FIELD} h-6 w-full appearance-none pl-2 text-xs`}>
        {options.map((o) => <option key={o}>{o}</option>)}
      </select>
      <span className="pointer-events-none absolute top-2 right-2"><Chevron size={9} w={1.300} /></span>
    </div>
  );
}

function Spinner({ id, value, label, placeholder, className }: { id: string; value?: string; label?: string; placeholder?: string; className: string }) {
  return (
    <div className={`relative ${className}`}>
      <input id={id} aria-label={label} defaultValue={value} placeholder={placeholder} className={`${FIELD} h-6 w-full pl-1 placeholder:text-[#8a8a8a]`} />
      <span className="pointer-events-none absolute top-[3px] right-1 flex h-[18px] flex-col justify-between"><Chevron size={7} up w={1.300} /><Chevron size={7} w={1.300} /></span>
    </div>
  );
}

function ToolButton({ label, children, on = false }: { label: string; children?: ReactNode; on?: boolean }) {
  return (
    <button aria-label={label} className={`flex size-6 items-center justify-center rounded-sm border border-[#5f5f5f] text-white ${on ? "bg-[#111]" : "bg-[#292929]"}`}>{children}</button>
  );
}

function Fx() {
  return <span aria-hidden="true" className="font-['Liberation_Serif'] text-lg leading-4 italic">fx</span>;
}

const Lines = ({ d }: { d: string }) => <Svg size={16} vb="0 0 16 16"><path d={d} stroke="#fff" strokeWidth="1.200" /></Svg>;

function VisualizationsPane() {
  const [alpha, setAlpha] = useState(0);
  return (
    <aside aria-label="Visualizations" className="flex w-[181px] shrink-0 flex-col border-l border-[#5a5a5a] bg-[#141414] text-xs text-white">
      <div className="flex h-[37px] items-center justify-between pr-2.5 pl-2">
        <h2 className="text-[15px] font-semibold">Visualizations</h2>
        <button aria-label="Collapse visualizations"><DoubleChevron /></button>
      </div>
      <h3 className="pl-2 leading-[18px] font-semibold">Format visual</h3>
      <div className="mt-0.5 flex h-8 items-center justify-between pr-3 pl-3">
        <button aria-label="Build visual"><Svg size={24} vb="0 0 24 24"><path d="M0 .8h19" strokeWidth="1.500" /><path d="M.8 5.500h22.500v6H.8zM.8 14h22.500M.8 17.500h22.500v6H.8z" strokeDasharray="2 1.500" /></Svg></button>
        <button aria-label="Format visual" className="flex size-8 items-center justify-center bg-[#2b2b2b]">
          <Svg size={22} h={24} vb="0 0 22 24"><path d="M1 18V9h6M14 5h5v4" stroke="#999" strokeWidth="1.500" /><path d="M7.500 1h6v16h-6z" fill="#2aac94" stroke="none" /><path d="M21 8c-4 2-8 6-9 9l2.500 2C17 17 20 13 21 8z" fill="#777" /><path d="M12 17c-4 0-2 4-7 5 4 2 10 1 9.500-3z" fill="#2aac94" stroke="#ddd" strokeWidth=".8" /></Svg>
        </button>
        <button aria-label="Analytics"><Svg size={25} vb="0 0 25 25"><circle cx="10.500" cy="10.500" r="9.500" /><path d="M1 11l5-4 4 3 8-6M6 11v6M10 12v8M13.500 10v9M17 9v7" /><path d="M18 18l6 6" strokeWidth="3" /></Svg></button>
      </div>
      <svg viewBox="0 0 180 13" preserveAspectRatio="xMidYMax slice" className="block h-[13px] w-full" fill="none" stroke="#777" aria-hidden="true"><path d="M0 12.500h82l8-8 8 8h82" /></svg>
      <label className={`${FIELD} mx-2 mt-2 flex h-[27px] items-center gap-2 pl-2`}>
        <Magnifier size={14} flip color="#fff" />
        <input aria-label="Search settings" placeholder="Search" className="w-full bg-transparent text-[13px] outline-none placeholder:text-white" />
      </label>
      <div className="mt-[15px] flex h-10 items-start gap-4 pl-3 text-[13px]">
        <button className="border-b-2 border-[#2aac94] pt-0.5 pb-1 font-bold">Visual</button>
        <button className="pt-0.5">General</button>
        <button aria-label="More options" className="mt-2.5 mr-[18px] ml-auto"><Svg size={11} h={3} vb="0 0 11 3"><path d="M0 1.500h2.500M4 1.500h2.500M8 1.500h2.500" stroke="#fff" strokeWidth="2" /></Svg></button>
      </div>
      <button className="flex h-[38px] shrink-0 items-center gap-1.5 border-b border-[#666] bg-[#2a2a2a] pl-3">
        <Svg size={9} h={10} vb="0 0 9 10"><path d="M1 0v3h4.500a2.800 2.800 0 1 1 0 6H3M3 .5L.8 3 3 5.500" stroke="#bbb" strokeWidth="1" /></Svg>
        Reset to default
      </button>
      <button className="flex h-10 shrink-0 items-center gap-1.5 pt-0.5 pl-2.5 font-semibold"><Chevron size={9} w={2} />Callout values</button>
      <div className="mb-2 flex min-h-0 flex-1 overflow-hidden bg-[#2a2a2a]">
        <div className="flex min-w-0 flex-1 flex-col gap-2 px-2 py-2 pr-0">
          <div className="h-[92px] shrink-0 rounded-sm bg-[#1f1f1f] px-2 pt-3">
            <div className="leading-[18px] font-semibold text-[#ababab]">Apply settings to</div>
            <label htmlFor="state" className="mt-2.5 mb-0.5 block leading-[18px]">State</label>
            <Select id="state" value="Default" className="w-full" options={["Default", "Hover", "Selected"]} />
          </div>
          <div className="h-[480px] shrink-0 rounded-sm bg-[#1f1f1f] px-2 pt-3">
            <div className="flex items-center justify-between">
              <button className="flex items-center gap-1.5 leading-[18px] font-semibold"><Chevron size={9} w={2} />Values</button>
              <button role="switch" aria-checked="true" aria-label="Values" className="flex h-4 w-8 items-center justify-between rounded-full bg-[#2aac94] px-1 text-[9px] text-[#123c34]">On<span className="size-2 rounded-full bg-[#1f1f1f]" /></button>
            </div>
            <label htmlFor="font" className="mt-[10px] mb-0.5 block leading-[18px]">Font</label>
            <div className="flex gap-1">
              <Select id="font" value="DIN" className="w-[90px]" options={["DIN", "Segoe UI"]} />
              <Spinner id="fontsize" label="Font size" value="12" className="flex-1" />
            </div>
            <div className="mt-1 flex gap-1">
              <ToolButton label="Bold"><b className="text-sm">B</b></ToolButton>
              <ToolButton label="Italic"><i className="font-['Liberation_Serif'] text-base">I</i></ToolButton>
              <ToolButton label="Underline"><u className="text-sm">U</u></ToolButton>
            </div>
            <div className="mt-3 mb-0.5 leading-[18px]">Color</div>
            <div className="flex gap-1">
              <button aria-label="Pick color" className={`${FIELD} flex h-6 w-[52px] items-center justify-between px-1`}><span className="size-4 border border-[#999] bg-[#252423]" /><span className="pr-1"><Chevron size={9} w={1.300} /></span></button>
              <ToolButton label="Conditional color"><Fx /></ToolButton>
            </div>
            <label htmlFor="alpha" className="mt-2 mb-2 block leading-[18px]">Transparency</label>
            <div className="flex items-center gap-1.5">
              <Spinner id="alphaValue" label="Transparency percent" value="0 %" className="w-[54px]" />
              <input id="alpha" type="range" min="0" max="100" value={alpha} onChange={(e) => setAlpha(Number(e.target.value))}
                className="h-[3px] w-[82px] appearance-none bg-[#a5a5a5] [&::-webkit-slider-thumb]:size-3.5 [&::-webkit-slider-thumb]:appearance-none [&::-webkit-slider-thumb]:rounded-full [&::-webkit-slider-thumb]:border [&::-webkit-slider-thumb]:border-[#777] [&::-webkit-slider-thumb]:bg-[#2aac94]" />
            </div>
            <div className="mt-3.5 mb-1 leading-[18px]">Horizontal alignment</div>
            <div className="flex gap-1">
              <ToolButton label="Align left" on><Lines d="M1 4h11M1 8h14M1 12h7" /></ToolButton>
              <ToolButton label="Align center"><Lines d="M3 4h10M1 8h14M4 12h8" /></ToolButton>
              <ToolButton label="Align right"><Lines d="M4 4h11M1 8h14M8 12h7" /></ToolButton>
            </div>
            <div className="mt-2.5 flex items-center justify-between leading-[18px]">
              Text wrap
              <button role="switch" aria-checked="false" aria-label="Text wrap" className="flex h-4 w-8 items-center justify-between rounded-full border border-[#999] px-1 text-[9px] text-[#b0b0b0]"><span className="size-2 rounded-full bg-[#b0b0b0]" />Off</button>
            </div>
            <label htmlFor="units" className="mt-2.5 mb-0.5 block leading-[18px]">Display units</label>
            <Select id="units" value="Auto" className="w-full" options={["Auto", "None", "Thousands"]} />
            <label htmlFor="decimals" className="mt-2 mb-0.5 block leading-[18px]">Value decimal places</label>
            <div className="flex gap-1">
              <Spinner id="decimals" placeholder="Auto" className="w-[70px]" />
              <ToolButton label="Conditional decimals"><Fx /></ToolButton>
            </div>
            <label htmlFor="blank" className="mt-2 mb-0.5 block leading-[18px]">Show blank as</label>
            <div className="flex gap-1">
              <input id="blank" className={`${FIELD} h-6 w-[120px]`} />
              <ToolButton label="Conditional blank" />
            </div>
          </div>
        </div>
        <div className="flex w-2 shrink-0 justify-end pt-[150px]"><span className="h-[279px] w-1.5 rounded-full bg-[#666]" /></div>
      </div>
    </aside>
  );
}

/* ---------- data pane ---------- */

function DataPane() {
  const fields: [string, string][] = [
    ["Item Fat Content", ""], ["Item Identifier", ""], ["Item Type", ""], ["Item Visibility", "sum"], ["Item Weight", "sum"],
    ["Outlet Establish...", "sum"], ["Outlet Identifier", ""], ["Outlet Location...", ""], ["Outlet Size", ""], ["Outlet Type", ""],
    ["Rating", "sum"], ["Sales", "sum"], ["Total sales", "calc"],
  ];
  return (
    <aside aria-label="Data" className="flex w-[181px] shrink-0 flex-col border-l border-[#5a5a5a] bg-[#141414] text-xs text-white">
      <div className="flex h-[37px] items-center justify-between pr-2.5 pl-2">
        <h2 className="text-[15px] font-semibold">Data</h2>
        <button aria-label="Collapse data"><DoubleChevron /></button>
      </div>
      <label className="mx-1 mt-2 flex h-6 items-center gap-2 rounded border border-[#888] bg-[#1f1f1f] pl-3">
        <Magnifier size={15} color="#999" />
        <input aria-label="Search fields" placeholder="Search" className="w-full bg-transparent text-[13px] outline-none placeholder:text-[#999]" />
      </label>
      <button className="mt-2.5 flex h-6 items-center pl-3.5 whitespace-nowrap">
        <Chevron size={9} w={1.600} />
        <span className="relative mr-1 ml-1.5">
          <Svg size={13} vb="0 0 13 13"><rect x=".7" y=".7" width="11.600" height="11.600" rx="2" stroke="#fff" /><path d="M.7 4.500h12M.7 8.500h12M4.500.7v12M8.500.7v12" stroke="#fff" strokeWidth="1" /></Svg>
          <span className="absolute top-1.5 left-1.5 flex size-3 items-center justify-center rounded-full bg-[#0f6b5b]">
            <svg width="6" height="6" viewBox="0 0 8 8" fill="none" stroke="#fff" strokeWidth="1.800" aria-hidden="true"><path d="M1 4l2 2 4-4.500" /></svg>
          </span>
        </span>
        BlinkIT-Grocery-Data
      </button>
      <ul>
        {fields.map(([t, k]) => (
          <li key={t}>
            <label className="flex h-6 items-center pl-11 whitespace-nowrap">
              <span className="grid size-3 place-items-center">
                <input type="checkbox" defaultChecked={t === "Outlet Location..."} className="peer col-start-1 row-start-1 size-3 appearance-none rounded-[1px] border border-[#a5a5a5] checked:border-[#7fd0c1] checked:bg-[#2aac94]" />
                <svg width="9" height="9" viewBox="0 0 9 9" fill="none" stroke="#0f4a40" strokeWidth="1.200" aria-hidden="true" className="col-start-1 row-start-1 hidden peer-checked:block"><path d="M1 5l2 2 5-5.500" /></svg>
              </span>
              <span className="ml-2 flex w-[17px]">
                {k === "sum" && <Svg size={12} vb="0 0 12 12"><path d="M11 2.500V1H1l5 5-5 5h10V9.500" stroke="#fff" strokeWidth="1.200" /></Svg>}
                {k === "calc" && <Svg size={12} h={14} vb="0 0 12 14"><rect x=".7" y=".7" width="10.600" height="12.600" rx="1.500" stroke="#fff" strokeWidth="1.100" /><path d="M3 3h6v2H3zM2.500 7.500h7M2.500 9.500h7M2.500 11.500h7" stroke="#fff" strokeWidth="1.100" strokeDasharray="1.600 1" /></Svg>}
              </span>
              {t}
            </label>
          </li>
        ))}
      </ul>
    </aside>
  );
}

/* ---------- status bar and taskbar ---------- */

function StatusBar() {
  return (
    <footer className="flex h-[25px] shrink-0 items-center border-t border-[#5a5a5a] bg-[#141414] pr-[18px] pl-1 text-xs text-[#d6d6d6]">
      <span>Page 1 of 1</span>
      <span className="ml-auto font-bold">-</span>
      <input type="range" aria-label="Zoom" defaultValue="52" className="mx-1 h-px w-[100px] appearance-none bg-[#cfcfcf] [&::-webkit-slider-thumb]:h-[11px] [&::-webkit-slider-thumb]:w-1 [&::-webkit-slider-thumb]:appearance-none [&::-webkit-slider-thumb]:bg-[#d6d6d6]" />
      <span className="text-sm">+</span>
      <span className="mr-3.5 ml-3.5">110%</span>
      <button aria-label="Fit to page"><Svg size={14} h={10} vb="0 0 14 10"><rect x=".7" y=".7" width="12.600" height="8.600" rx="1" /><path d="M5 3H3v4h2M9 3h2v4H9" /></Svg></button>
    </footer>
  );
}

function Chrome({ badge }: { badge: ReactNode }) {
  return (
    <svg width="28" height="28" viewBox="0 0 28 28" className="-mt-1" aria-hidden="true">
      <circle cx="13" cy="16" r="12" fill="#fbbc05" />
      <path d="M13 16L2.600 10A12 12 0 0 1 23.400 10H13z" fill="#ea4335" />
      <path d="M2.600 10l5.200 9L13 28A12 12 0 0 1 2.600 10z" fill="#2f9e4c" />
      <path d="M7.800 19l5.200 3 5.200-3-5.200 9A12 12 0 0 1 2.600 22z" fill="#2f9e4c" />
      <circle cx="13" cy="16" r="5.600" fill="#fff" />
      <circle cx="13" cy="16" r="4.400" fill="#3b7ded" />
      {badge}
    </svg>
  );
}

const apps: { name: string; icon: ReactNode; run?: boolean; active?: boolean }[] = [
  { name: "Chrome", run: true, icon: <Chrome badge={<g><circle cx="21" cy="7" r="6.800" fill="#c5c9e4" stroke="#8d90a8" /><path d="M18 4l6 4-1 3-5-3z" fill="#d8283c" /></g>} /> },
  { name: "Copilot", icon: <Copilot size={24} /> },
  {
    name: "Edge",
    icon: (
      <svg width="24" height="24" viewBox="0 0 24 24" aria-hidden="true">
        <defs><linearGradient id="eg" x1="0" y1="0" x2="1" y2="0"><stop offset="0" stopColor="#1f9de0" /><stop offset=".6" stopColor="#2fc6d8" /><stop offset="1" stopColor="#63d64b" /></linearGradient></defs>
        <path d="M0 12A12 12 0 0 1 24 11c0 4-3 6-6 6-3.500 0-4.500-1.500-3.500-3 1.500-2 .5-5.500-3.500-5.500C6 8.500 0 12 0 12z" fill="url(#eg)" />
        <path d="M0 12c0-3 3-6 8-6 3 0 5 1 6 3-5-1-7 2-7 5.500C7 20 13 22 19 20a12 12 0 0 1-8 4A12 12 0 0 1 0 12z" fill="#0f6cbf" />
        <path d="M8 12c-2 7 5 11 13 6 1-.5 1.500 0 1 1-3 5-10 6-13.500 3C5 19 5.500 14 8 12z" fill="#0b4f94" />
      </svg>
    ),
  },
  {
    name: "Visual Studio Code",
    icon: (
      <svg width="24" height="24" viewBox="0 0 24 24" aria-hidden="true">
        <path d="M17.500 0L24 3v18l-6.500 3V0z" fill="#29a5ee" />
        <path d="M17.500 0v6.500L3 18 .5 16.200 17.500 0z" fill="#0a6fb8" />
        <path d="M17.500 24v-6.500L3 6 .5 7.800 17.500 24z" fill="#1184cf" />
      </svg>
    ),
  },
  {
    name: "File Explorer",
    icon: (
      <svg width="24" height="24" viewBox="0 0 24 24" aria-hidden="true">
        <path d="M0 3.500C0 2.500.5 2 1.500 2H9l3 3v4H0z" fill="#e0a018" />
        <path d="M0 7h9l2.500-3H23c.6 0 1 .4 1 1v17H0z" fill="#fcd154" />
        <path d="M4 22v-4c0-1.600 1-2.500 2.500-2.500h11c1.500 0 2.500 1 2.500 2.500v4z" fill="#1674c8" />
        <path d="M8 19.500h8V22H8z" fill="#0c4f90" />
      </svg>
    ),
  },
  {
    name: "Brave", run: true,
    icon: (
      <svg width="24" height="24" viewBox="0 0 24 24" aria-hidden="true">
        <path d="M7 0h10l2 2.200 2-.4 2 3-.8 2.200.8 3-2.800 9-4 3.500L12 24l-4.200-1.500-4-3.500L1 10l.8-3L1 4.800l2-3 2 .4z" fill="#fb4b1e" />
        <path d="M12 4.500l4-.5 3.500 4-1.500 4 .5 2.500-3.500 2.500L12 19.500 9 17l-3.500-2.500L6 12 4.500 8 8 4z" fill="#fff" />
        <path d="M7 8.500l3 1v3l-2 1zM17 8.500l-3 1v3l2 1zM10.500 14h3L12 16z" fill="#fb4b1e" />
      </svg>
    ),
  },
  { name: "Chrome profile 2", run: true, icon: <Chrome badge={<g><circle cx="21" cy="7" r="6.800" fill="#d8dde0" stroke="#999" /><path d="M16 9c1-5 5-6 8-5l-4 4z" fill="#38b59a" /><path d="M20 10l5-4 1 3-3 3z" fill="#e8b8c8" /></g>} /> },
  {
    name: "WhatsApp", run: true,
    icon: (
      <svg width="25" height="25" viewBox="0 0 24 24" aria-hidden="true">
        <path d="M1 23l1.700-5.700A10.800 10.800 0 1 1 6.700 21.400z" fill="#fff" stroke="#1f8556" strokeWidth="1.900" />
        <path d="M8.200 6.500c-1.500.6-2 2.300-1.200 4 1.500 3.500 4 6 7.500 7 1.800.4 3.300-.6 3.300-2.500l-2.800-1.600-1.500 1.500c-2-.8-3.200-2.200-4-4L10.700 9.500 9.500 6.500z" fill="#1f8556" />
      </svg>
    ),
  },
  {
    name: "Excel", run: true,
    icon: (
      <svg width="25" height="24" viewBox="0 0 25 24" aria-hidden="true">
        <path d="M6 2h19v7H6z" fill="#21a366" /><path d="M15 2h10v7H15z" fill="#33c481" /><path d="M6 8h19v7H6z" fill="#107c41" /><path d="M6 15h19v7H6z" fill="#185c37" />
        <rect y="6" width="13" height="12" rx="1" fill="#0f6b38" />
        <path d="M3.800 8.500l5.400 7M9.200 8.500l-5.400 7" stroke="#fff" strokeWidth="1.800" />
      </svg>
    ),
  },
  {
    name: "Power BI Desktop", run: true, active: true,
    icon: (
      <svg width="24" height="24" viewBox="0 0 24 24" aria-hidden="true">
        <rect width="24" height="24" fill="#0f6cbd" />
        <path d="M12 1h11v23H12z" fill="#e0a21c" /><path d="M7 6h11v18H7z" fill="#f2c838" /><path d="M2 12h10v12H2z" fill="#fbe27a" />
      </svg>
    ),
  },
];

function Taskbar() {
  return (
    <footer className="grid h-12 shrink-0 grid-cols-[1fr_auto_1fr] items-center bg-[#eeeeee] text-[#1a1a1a]">
      <span />
      <div className="ml-2.5 flex items-center">
        <button aria-label="Start" className="mr-3.5">
          <svg width="24" height="24" viewBox="0 0 24 24" fill="#0a78d4" aria-hidden="true"><path d="M0 0h11.400v11.400H0zM12.600 0H24v11.400H12.600zM0 12.600h11.400V24H0zM12.600 12.600H24V24H12.600z" /></svg>
        </button>
        <label className="mr-[3px] flex h-[31px] w-[218px] items-center gap-2.5 rounded-full border border-[#dadada] bg-[#fbfbfb] pl-2.5">
          <Magnifier size={16} color="#222" />
          <input aria-label="Search Windows" placeholder="Search" className="w-36 bg-transparent text-sm outline-none placeholder:text-[#666]" />
        </label>
        {apps.map((a) => (
          <span key={a.name} className="flex w-11 justify-center">
            <button aria-label={a.name} className={`relative flex h-10 w-[38px] items-center justify-center rounded ${a.active ? "bg-[#fafafa]" : ""}`}>
              {a.icon}
              {a.run && <span className={`absolute bottom-0.5 left-1/2 h-[3px] -translate-x-1/2 rounded-full ${a.active ? "w-4 bg-[#0a6fc2]" : "w-1.5 bg-[#8a8a8a]"}`} />}
            </button>
          </span>
        ))}
      </div>
      <div className="flex items-center justify-end pr-[21px] text-xs leading-4">
        <button aria-label="Show hidden icons" className="mr-5"><Chevron size={12} up color="#1a1a1a" w={1} /></button>
        <span className="mr-[18px] text-center text-[11px]">ENG<br />IN</span>
        <Svg size={17} h={16} vb="0 0 17 16"><path d="M1 6.500c4.500-4.500 10.500-4.500 15 0M3.300 9c3.200-3.200 7.200-3.200 10.400 0M5.600 11.300c2-1.800 4-1.800 5.800 0" stroke="#1a1a1a" /><circle cx="8.500" cy="13.300" r="1.400" fill="#1a1a1a" stroke="none" /></Svg>
        <span className="mx-2"><Svg size={17} h={16} vb="0 0 17 16"><path d="M1 6h2.500L7 3v10l-3.500-3H1zM9.500 6c1 1.300 1 2.700 0 4M11.500 4.200c2 2.500 2 5.200 0 7.700M13.700 2.500c2.700 3.500 2.700 7.500 0 11" stroke="#1a1a1a" strokeWidth="1" /></Svg></span>
        <Svg size={17} h={16} vb="0 0 17 16"><path d="M7 4.500h7v8H3.500V10M15 7h1v3h-1" stroke="#1a1a1a" /><path d="M5 1c3 2 2.500 6-1 8H1C0 5 2 2 5 1z" fill="#1a1a1a" stroke="none" /></Svg>
        <span className="mr-2 ml-1.5 w-[72px] text-right whitespace-nowrap">21:55:55<br />03-06-2025</span>
        <button aria-label="Notifications"><svg width="14" height="16" viewBox="0 0 14 16" fill="#0b3f91" aria-hidden="true"><path d="M7 0a5 5 0 0 1 5 5v4.500L14 13H0l2-3.500V5a5 5 0 0 1 5-5zM4.800 14h4.400c-.3 2.500-4.100 2.500-4.400 0z" /></svg></button>
      </div>
    </footer>
  );
}

export default function App() {
  return (
    <div className="flex h-screen flex-col overflow-hidden bg-[#141414] font-['Open_Sans',sans-serif]">
      <TitleBar />
      <Tabs />
      <Ribbon />
      <div className="flex min-h-0 flex-1">
        <Rail />
        <main className="flex min-w-0 flex-1 flex-col bg-[#292929]">
          <div className="flex min-h-0 flex-1">
            <div className="flex min-w-0 flex-1 flex-col bg-white"><Report /></div>
            <FiltersPane />
          </div>
          <PageTabs />
        </main>
        <VisualizationsPane />
        <DataPane />
      </div>
      <StatusBar />
      <Taskbar />
    </div>
  );
}
